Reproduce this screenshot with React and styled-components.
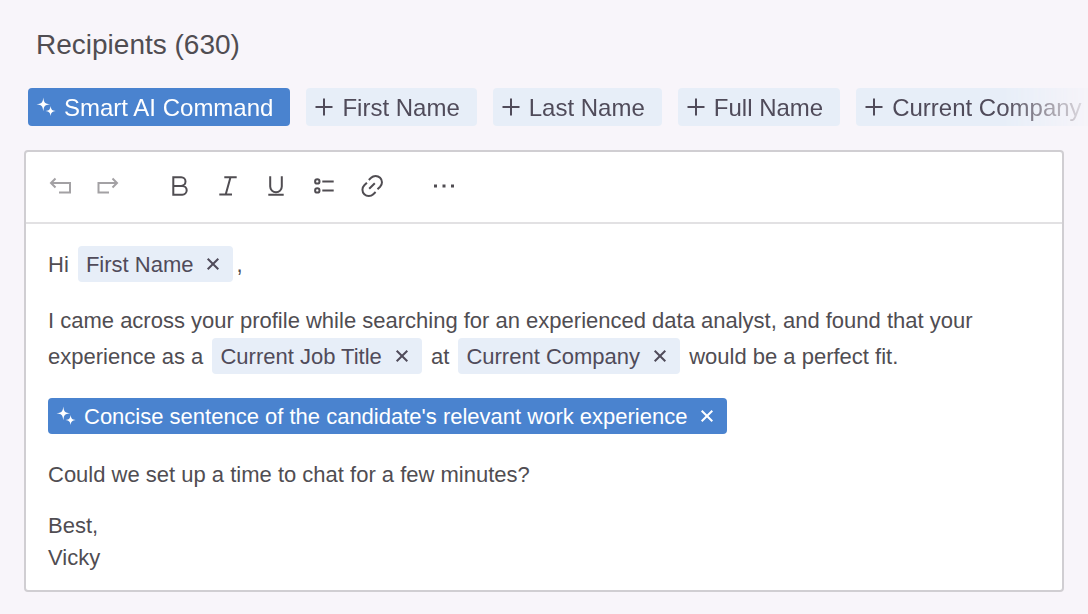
import React from 'react'
import styled, { createGlobalStyle, css } from 'styled-components'

const GlobalStyle = createGlobalStyle`
  *, *::before, *::after {
    box-sizing: border-box;
  }

  body {
    margin: 0;
    background-color: #f8f5fa;
    color: #504d52;
    font-family: "Liberation Sans", Arial, Helvetica, sans-serif;
  }

  button {
    font: inherit;
    color: inherit;
    border: 0;
    padding: 0;
    background: none;
    cursor: pointer;
  }
`

const Page = styled.main`
  padding: 28px 0 24px;
`

const Heading = styled.h1`
  margin: 0 36px 26px;
  font-size: 28px;
  font-weight: 400;
  line-height: 34px;
`

const InsertBar = styled.div`
  display: flex;
  gap: 16px;
  padding-left: 28px;
  margin-bottom: 24px;
  overflow: hidden;
  mask-image: linear-gradient(to right, #000 calc(100% - 84px), rgba(0, 0, 0, 0.1));
`

const InsertButton = styled.button`
  display: flex;
  flex-shrink: 0;
  align-items: center;
  gap: 8px;
  height: 38px;

  && {
    padding: 0 17px 0 8px;
    border-radius: 4px;
    font-size: 24px;
    background-color: ${props => props.$smart ? '#4a83cf' : '#e7eef8'};
    color: ${props => props.$smart ? '#fff' : '#504b5a'};
  }
`

const Label = styled.span`
  padding-top: 2px;
`

const Editor = styled.section`
  margin: 0 24px;
  border: 2px solid #d0ced2;
  border-radius: 4px;
  background-color: #fff;
`

const Toolbar = styled.div`
  display: flex;
  gap: 24px;
  padding: 10px 10px 12px;
  border-bottom: 2px solid #e2e1e3;
`

const ToolGroup = styled.div`
  display: flex;
`

const ToolButton = styled.button`
  display: flex;
  align-items: center;
  justify-content: center;
  width: 48px;
  height: 48px;

  &:disabled {
    color: #a3a1a4;
    cursor: default;
  }
`

const Message = styled.div`
  padding: 22px 22px 16px;
  font-size: 22px;
  line-height: 34px;
  outline: none;
`

const Paragraph = styled.p`
  margin: 0 0 ${props => props.$tight ? '18px' : '22px'};
`

const Signature = styled.p`
  margin: 0;
  line-height: 32px;
`

const Chip = styled.span`
  display: inline-flex;
  align-items: center;
  gap: 8px;
  height: 36px;
  margin: 0 3px;
  padding: 0 8px;
  border-radius: 4px;
  background-color: #e7eef8;
  color: #504b5a;
  line-height: 32px;
  white-space: nowrap;

  ${props => props.$smart && css`
    margin: 2px 0 0;
    background-color: #4a83cf;
    color: #fff;
  `}
`

const RemoveButton = styled.button`
  display: flex;
  align-items: center;
  justify-content: center;
  width: 24px;
  height: 24px;
`

const Svg = styled.svg`
  display: block;
  flex-shrink: 0;
  fill: none;
  stroke: currentColor;
  stroke-width: 2;
`

const Sparkle = () => (
  <Svg width="20" height="20" viewBox="0 0 20 20" aria-hidden="true">
    <g fill="currentColor" stroke="none">
      <path d="M7.3 .4C7.9 5.6 8.9 6.6 14.2 7.3C8.9 8 7.9 9 7.3 14.2C6.7 9 5.7 8 .4 7.3C5.7 6.6 6.7 5.6 7.3 .4Z" />
      <path d="M14.6 8.9C15.2 12.6 15.9 13.4 19.7 14C15.9 14.6 15.2 15.4 14.6 19.1C14 15.4 13.3 14.6 9.5 14C13.3 13.4 14 12.6 14.6 8.9Z" />
    </g>
  </Svg>
)

const Plus = () => (
  <Svg width="20" height="20" viewBox="0 0 20 20" aria-hidden="true">
    <path d="M10 1.5v17M1.5 10h17" />
  </Svg>
)

const Cross = () => (
  <Svg width="24" height="24" viewBox="0 0 24 24" aria-hidden="true">
    <path d="M6.7 6.7l10.6 10.6M17.3 6.7L6.7 17.3" />
  </Svg>
)

const tools = [
  [
    { label: 'Undo', disabled: true, icon: <path d="M7.5 4.5L3 9l4.5 4.5M3 9h19v9.5H11" /> },
    { label: 'Redo', disabled: true, icon: <path d="M16.5 4.5L21 9l-4.5 4.5M21 9H2.5v9.5H13" /> },
  ],
  [
    { label: 'Bold', icon: <path d="M5.3 3.3h7.9a4.3 4.3 0 0 1 0 8.6H5.3zM5.3 11.9h9a4.4 4.4 0 0 1 0 8.8h-9z" /> },
    { label: 'Italic', icon: <path d="M8.3 3.3h12.4M3.3 20.5h12.7M14.5 3.3L9.7 20.5" /> },
    { label: 'Underline', icon: <path d="M6.2 2.3v10.2a5.8 5.8 0 0 0 11.6 0V2.3M4.3 20.7h15.4" /> },
    {
      label: 'List',
      icon: (
        <>
          <circle cx="5.3" cy="7.4" r="2.2" />
          <circle cx="5.3" cy="16.4" r="2.2" />
          <path d="M10.3 7.4h11.4M10.3 16.4h11.4" />
        </>
      ),
    },
    {
      label: 'Link',
      icon: <path d="M8.8 5.9l2.3-2.1a6.3 6.3 0 0 1 9 9l-2.6 2.4M15.6 18.1l-2.3 2.1a6.3 6.3 0 0 1-9-9l2.6-2.4M9.2 14.8l5.6-5.6" />,
    },
  ],
  [
    { label: 'More', icon: <path d="M2 12h3M10.5 12h3M19 12h3" strokeWidth="3" /> },
  ],
]

const fields = ['First Name', 'Last Name', 'Full Name', 'Current Company']

const Token = ({ label, smart }) => (
  <Chip $smart={smart} contentEditable={false}>
    {smart && <Sparkle />}
    <Label>{label}</Label>
    <RemoveButton type="button" aria-label={`Remove ${label}`}>
      <Cross />
    </RemoveButton>
  </Chip>
)

const App = () => {
  return (
    <>
      <GlobalStyle />
      <Page>
        <Heading>Recipients (630)</Heading>
        <InsertBar>
          <InsertButton type="button" $smart>
            <Sparkle />
            <Label>Smart AI Command</Label>
          </InsertButton>
          {fields.map(field => (
            <InsertButton type="button" key={field}>
              <Plus />
              <Label>{field}</Label>
            </InsertButton>
          ))}
        </InsertBar>
        <Editor>
          <Toolbar role="toolbar" aria-label="Formatting">
            {tools.map((group, i) => (
              <ToolGroup key={i}>
                {group.map(tool => (
                  <ToolButton type="button" key={tool.label} aria-label={tool.label} disabled={tool.disabled}>
                    <Svg width="24" height="24" viewBox="0 0 24 24" aria-hidden="true">{tool.icon}</Svg>
                  </ToolButton>
                ))}
              </ToolGroup>
            ))}
          </Toolbar>
          <Message
            contentEditable
            suppressContentEditableWarning
            spellCheck={false}
            role="textbox"
            aria-multiline="true"
            aria-label="Message"
          >
            <Paragraph>
              Hi <Token label="First Name" />,
            </Paragraph>
            <Paragraph>
              I came across your profile while searching for an experienced data analyst, and found that your
              experience as a <Token label="Current Job Title" /> at <Token label="Current Company" /> would be a perfect fit.
            </Paragraph>
            <Paragraph>
              <Token smart label="Concise sentence of the candidate's relevant work experience" />
            </Paragraph>
            <Paragraph $tight>Could we set up a time to chat for a few minutes?</Paragraph>
            <Signature>
              Best,
              <br />
              Vicky
            </Signature>
          </Message>
        </Editor>
      </Page>
    </>
  )
}

export default App
